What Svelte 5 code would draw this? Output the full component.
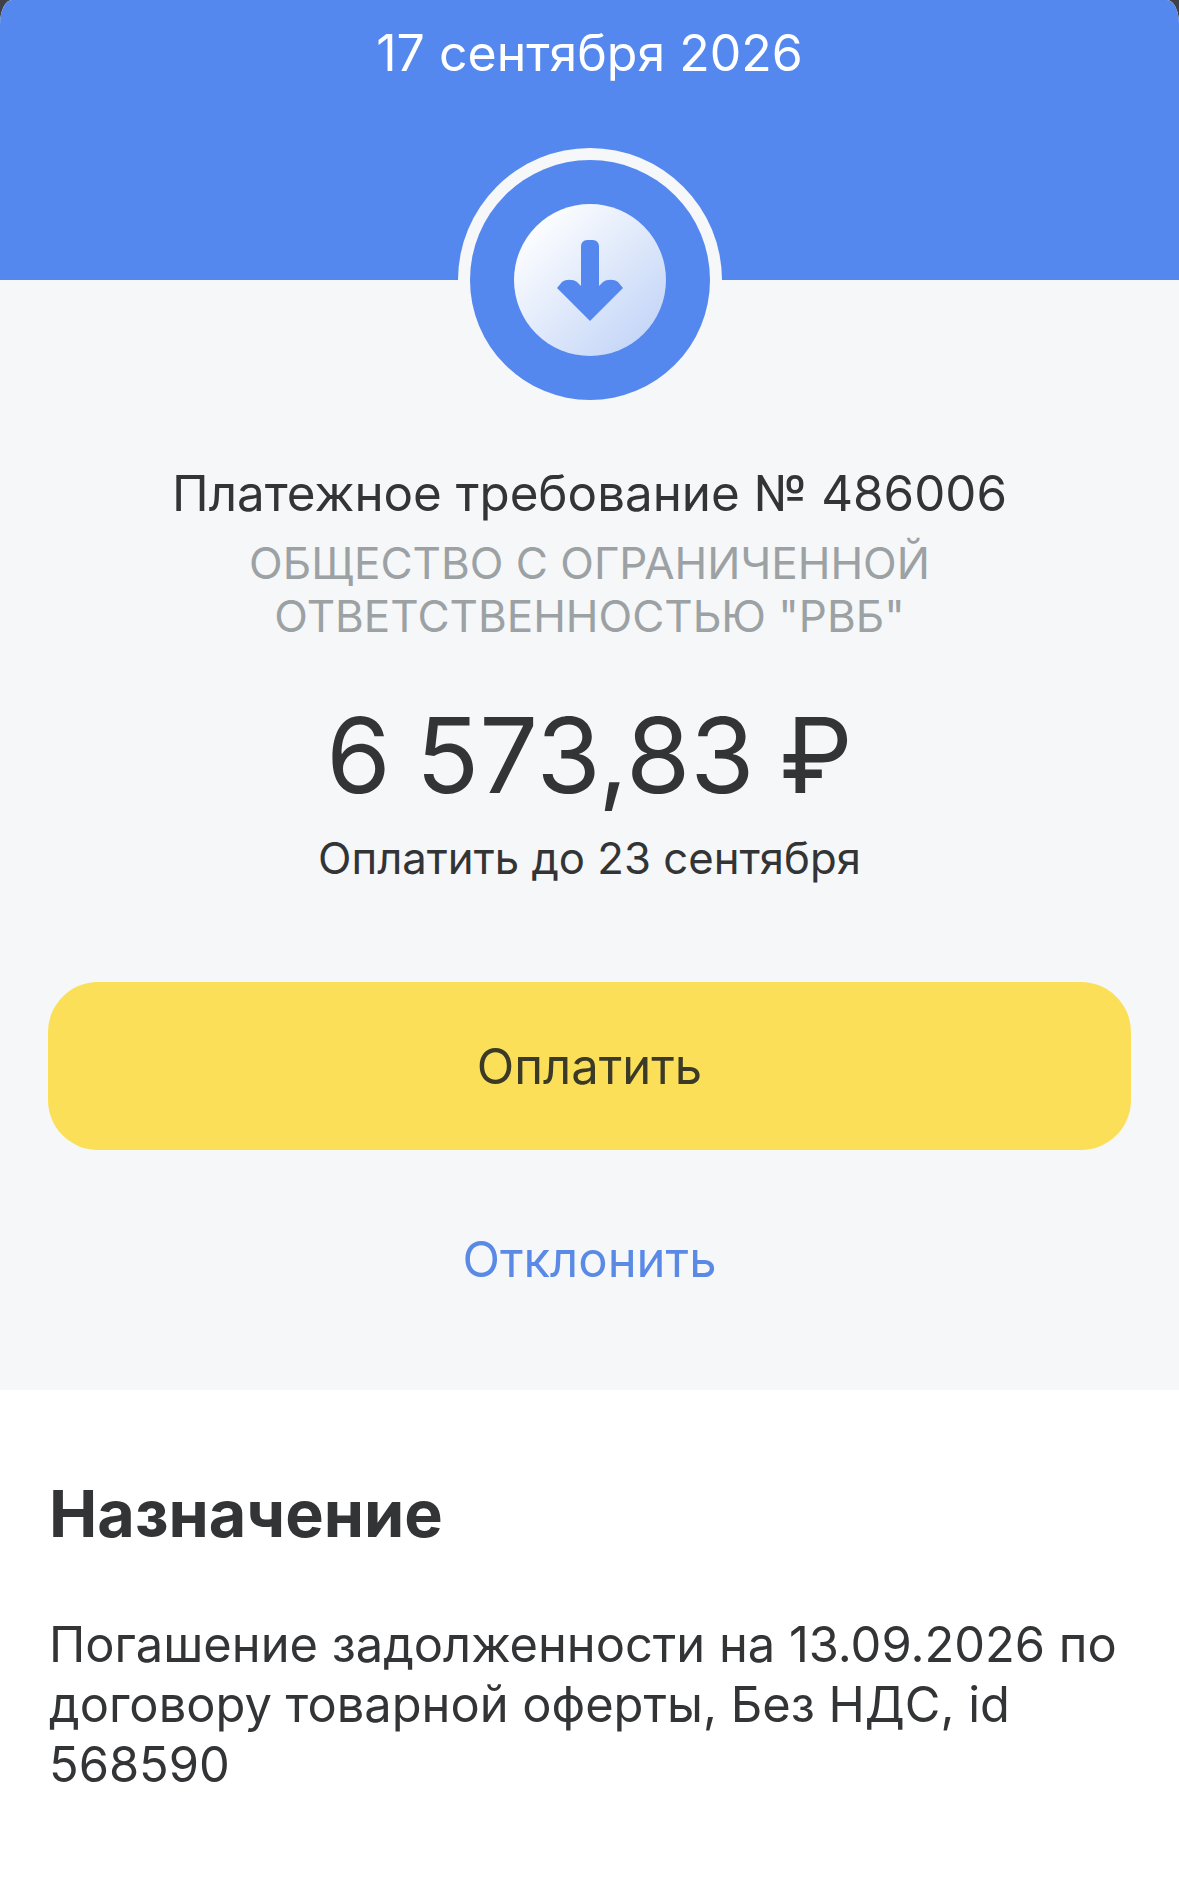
<script>
  const title = 'Платежное требование № 486006';
</script>

<div class="page">
  <main class="sheet">
    <header class="top">
      <div class="date">17 сентября 2026</div>
    </header>
    <section class="hero">
      <div class="ring">
        <div class="disc">
          <div class="face">
            <svg width="66" height="81" viewBox="0 0 66 81" aria-hidden="true">
              <path d="M24 6a6 6 0 0 1 6-6h6a6 6 0 0 1 6 6V46L46 42C50 39 57 39 61 42L66 48 33 81 0 48 5 42C9 39 16 39 20 42L24 46Z" fill="#5588ef" />
            </svg>
          </div>
        </div>
      </div>
      <h1 class="title">{title}</h1>
      <p class="org">ОБЩЕСТВО С ОГРАНИЧЕННОЙ<br />ОТВЕТСТВЕННОСТЬЮ "РВБ"</p>
      <div class="amount">6 573,83 ₽</div>
      <div class="due">Оплатить до 23 сентября</div>
      <button class="pay">Оплатить</button>
      <button class="decline">Отклонить</button>
    </section>
    <section class="purpose">
      <h2>Назначение</h2>
      <p>Погашение задолженности на 13.09.2026 по договору товарной оферты, Без НДС, id 568590</p>
    </section>
  </main>
</div>

<style>
  :global(body) {
    margin: 0;
    background: #3f4146;
  }
  .page {
    width: 1179px;
    height: 1877px;
    font-family: Inter, 'Noto Sans', sans-serif;
    color: #333436;
  }
  .sheet {
    height: 100%;
    border-radius: 12px 12px 0 0 / 24px 24px 0 0;
    overflow: hidden;
    background: #fff;
  }
  .top {
    height: 280px;
    background: #5588ef;
    display: flex;
    justify-content: center;
  }
  .date {
    margin-top: 22px;
    font-size: 50px;
    line-height: 62px;
    color: #fff;
  }
  .hero {
    height: 1110px;
    background: #f5f7f9;
    display: flex;
    flex-direction: column;
    align-items: center;
  }
  .ring {
    margin-top: -132px;
    width: 264px;
    height: 264px;
    box-sizing: border-box;
    padding: 12px;
    border-radius: 50%;
    background: #f5f7f9;
  }
  .disc {
    width: 240px;
    height: 240px;
    border-radius: 50%;
    background: #5588ef;
    display: flex;
    align-items: center;
    justify-content: center;
  }
  .face {
    width: 152px;
    height: 152px;
    border-radius: 50%;
    background: linear-gradient(135deg, #ffffff 10%, #bfd2f6 95%);
    display: flex;
    align-items: center;
    justify-content: center;
  }
  .title {
    margin: 51px 0 0;
    font-size: 49.3px;
    line-height: 60px;
    font-weight: 400;
  }
  .org {
    margin: 14px 0 0;
    font-size: 44px;
    line-height: 53px;
    text-align: center;
    color: #9ca1a4;
  }
  .amount {
    margin-top: 54px;
    font-size: 104px;
    line-height: 116px;
    word-spacing: -4px;
  }
  .due {
    margin-top: 19px;
    font-size: 43.7px;
    line-height: 54px;
  }
  .pay {
    margin-top: 96px;
    padding-top: 2px;
    width: 1083px;
    height: 168px;
    border: 0;
    border-radius: 50px;
    background: #fcdf58;
    color: #3b3a26;
    font: inherit;
    font-size: 49px;
  }
  .decline {
    margin-top: 80px;
    border: 0;
    padding: 0;
    background: none;
    color: #5a8ae6;
    font: inherit;
    font-size: 49px;
    line-height: 60px;
  }
  .purpose {
    padding: 86px 49px 0;
  }
  h2 {
    margin: 0;
    font-size: 64.7px;
    line-height: 76px;
    font-weight: 700;
  }
  .purpose p {
    margin: 63px 0 0;
    font-size: 48.8px;
    line-height: 60px;
  }
</style>
